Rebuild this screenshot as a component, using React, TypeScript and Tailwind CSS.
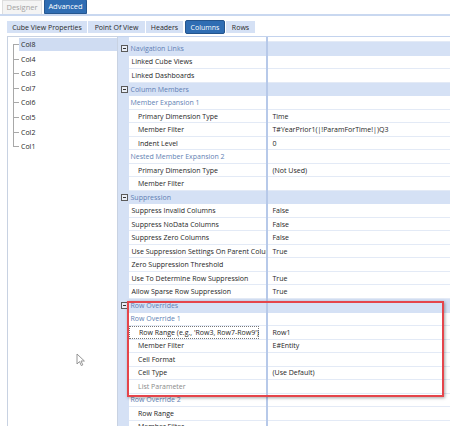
import React from 'react';

type Row = {
  kind: 'group' | 'sub' | 'item' | 'item2';
  name: string;
  value?: string;
  muted?: boolean;
  focus?: boolean;
};

const rows: Row[] = [
  { kind: 'item', name: 'List Parameter' },
  { kind: 'group', name: 'Navigation Links' },
  { kind: 'item', name: 'Linked Cube Views' },
  { kind: 'item', name: 'Linked Dashboards' },
  { kind: 'group', name: 'Column Members' },
  { kind: 'sub', name: 'Member Expansion 1' },
  { kind: 'item2', name: 'Primary Dimension Type', value: 'Time' },
  { kind: 'item2', name: 'Member Filter', value: 'T#YearPrior1(|!ParamForTime!|)Q3' },
  { kind: 'item2', name: 'Indent Level', value: '0' },
  { kind: 'sub', name: 'Nested Member Expansion 2' },
  { kind: 'item2', name: 'Primary Dimension Type', value: '(Not Used)' },
  { kind: 'item2', name: 'Member Filter' },
  { kind: 'group', name: 'Suppression' },
  { kind: 'item', name: 'Suppress Invalid Columns', value: 'False' },
  { kind: 'item', name: 'Suppress NoData Columns', value: 'False' },
  { kind: 'item', name: 'Suppress Zero Columns', value: 'False' },
  { kind: 'item', name: 'Use Suppression Settings On Parent Columns', value: 'True' },
  { kind: 'item', name: 'Zero Suppression Threshold' },
  { kind: 'item', name: 'Use To Determine Row Suppression', value: 'True' },
  { kind: 'item', name: 'Allow Sparse Row Suppression', value: 'True' },
  { kind: 'group', name: 'Row Overrides' },
  { kind: 'sub', name: 'Row Override 1' },
  { kind: 'item2', name: "Row Range (e.g., 'Row3, Row7-Row9')", value: 'Row1', focus: true },
  { kind: 'item2', name: 'Member Filter', value: 'E#Entity' },
  { kind: 'item2', name: 'Cell Format' },
  { kind: 'item2', name: 'Cell Type', value: '(Use Default)' },
  { kind: 'item2', name: 'List Parameter', muted: true },
  { kind: 'sub', name: 'Row Override 2' },
  { kind: 'item2', name: 'Row Range' },
  { kind: 'item2', name: 'Member Filter' },
];

const cols = ['Col8', 'Col4', 'Col3', 'Col7', 'Col6', 'Col5', 'Col2', 'Col1'];

const subTabs = ['Cube View Properties', 'Point Of View', 'Headers', 'Columns', 'Rows'];

const Collapse = () => (
  <div className="w-[7px] h-[7px] border border-[#5b5b5b] flex items-center justify-center bg-[#e9eef7]">
    <div className="w-[3px] h-px bg-[#333]" />
  </div>
);

const GridRow: React.FC<{ row: Row }> = ({ row }) => {
  const group = row.kind === 'group';
  const pad =
    row.kind === 'item2' ? 'pl-[9px]' : row.kind === 'item' ? 'pl-[2.5px]' : 'pl-[1.5px]';
  const color = row.muted
    ? 'text-[#8a8a8a]'
    : row.kind === 'sub' || group
      ? 'text-[#5f7fb4]'
      : 'text-[#262626]';
  return (
    <div className="flex h-[13.53px] shrink-0">
      <div className="w-[11px] bg-[#d5e1f5] flex items-center justify-center pl-[1px]">
        {group && <Collapse />}
      </div>
      <div
        className={`w-[137px] flex items-center overflow-hidden whitespace-nowrap ${pad} ${color} ${
          group ? 'bg-[#d5e1f5]' : 'bg-white border-b border-[#e3eaf6]'
        }`}
      >
        {row.focus ? (
          <span className="border border-dotted border-[#777] h-full flex items-center pl-[7px] pr-[3px] -ml-[9px] w-[130px]">
            <span className="pl-[2px]">{row.name}</span>
          </span>
        ) : (
          row.name
        )}
      </div>
      <div className="w-[2px] bg-[#b7c9e9]" />
      <div
        className={`flex-1 flex items-center pl-[4.5px] whitespace-nowrap text-[#262626] ${
          group ? 'bg-[#d5e1f5]' : 'bg-white border-b border-[#e3eaf6]'
        }`}
      >
        {row.value}
      </div>
    </div>
  );
};

export default function App() {
  return (
    <div
      className="relative w-[450px] h-[426px] overflow-hidden bg-white text-[7px] leading-none"
      style={{ fontFamily: '"Open Sans", "Noto Sans", sans-serif' }}
    >
      {/* top tabs */}
      <div className="flex items-end h-[16px] border-b-2 border-[#c9d8f0] pl-[2px] gap-[2px]">
        <div className="w-[40px] h-[14px] flex items-center justify-center bg-[#f4f4f4] border border-b-0 border-[#dedede] text-[#a3a3a3] text-[7.5px]">
          Designer
        </div>
        <div className="w-[43px] h-[15px] flex items-center justify-center bg-[#2f6db3] border border-[#25568f] rounded-t-[2px] text-white text-[7.5px]">
          Advanced
        </div>
      </div>

      {/* sub tabs */}
      <div className="flex items-center mt-[4px] pl-[7px] h-[14px]">
        {subTabs.map((t) =>
          t === 'Columns' ? (
            <div
              key={t}
              className="h-[14px] w-[40px] mx-[1px] flex items-center justify-center bg-[#2f6db3] border border-[#24548c] rounded-[2px] text-white"
            >
              {t}
            </div>
          ) : (
            <div
              key={t}
              className={`h-[12px] flex items-center justify-center bg-[#d5e1f5] text-[#2b2b2b] mr-[1px] ${
                t === 'Cube View Properties'
                  ? 'w-[80px]'
                  : t === 'Point Of View'
                    ? 'w-[57px]'
                    : t === 'Headers'
                      ? 'w-[37px]'
                      : 'w-[29px]'
              }`}
            >
              {t}
            </div>
          )
        )}
      </div>

      {/* body */}
      <div className="flex mt-[2px] h-[390px]">
        <div className="ml-[7px] w-[111px] border-l border-r border-t border-[#c8d2e2] bg-white">
          <div className="relative flex flex-col gap-[1.6px] pt-[1px]">
            <div className="absolute left-[5px] top-[7.5px] h-[102px] w-px bg-[#a8a8a8]" />
            {cols.map((c, i) => (
              <div key={c} className="flex h-[13px] items-center">
                <div className="w-[11px] flex items-center">
                  <div className="ml-[5px] w-[6px] h-px bg-[#a8a8a8]" />
                </div>
                <div
                  className={`flex-1 h-full flex items-center pl-[2px] text-[#262626] ${
                    i === 0 ? 'bg-[#cfdcf2]' : ''
                  }`}
                >
                  {c}
                </div>
              </div>
            ))}
          </div>
        </div>

        <div className="flex-1 border-t border-[#c3d3ee] overflow-hidden">
          <div className="flex flex-col mt-[-8.33px]">
            {rows.map((r, i) => (
              <GridRow key={i} row={r} />
            ))}
          </div>
        </div>
      </div>

      {/* highlight annotation */}
      <div className="absolute left-[127px] top-[301px] w-[317px] h-[96px] border-2 border-[#e5454b] shadow-[1px_1px_3px_rgba(0,0,0,0.35)]" />

      {/* mouse cursor */}
      <svg className="absolute left-[76px] top-[353px]" width="10" height="14" viewBox="0 0 10 14">
        <path
          d="M1 1 L1 11 L3.5 8.6 L5.3 12.6 L6.8 11.9 L5 8 L8.4 8 Z"
          fill="white"
          stroke="#8a8a8a"
          strokeWidth="0.9"
          strokeLinejoin="round"
        />
      </svg>
    </div>
  );
}
